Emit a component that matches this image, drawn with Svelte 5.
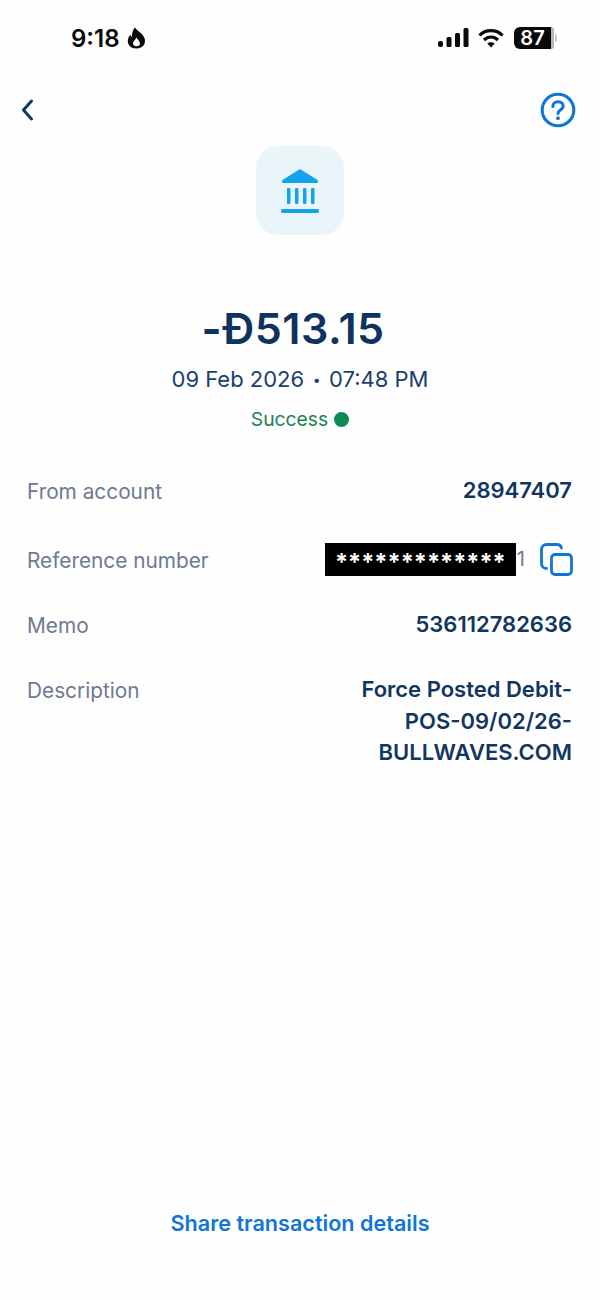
<script lang="ts">
	// Transaction details screen
	const rows = [
		{ label: 'From account', value: '28947407' },
		{ label: 'Reference number', masked: true },
		{ label: 'Memo', value: '536112782636' },
		{ label: 'Description', lines: ['Force Posted Debit-', 'POS-09/02/26-', 'BULLWAVES.COM'] }
	];
</script>

<div class="screen">
	<div class="status">
		<div class="time">
			<span>9:18</span>
			<svg width="19" height="22" viewBox="0 0 19 22">
				<path fill-rule="evenodd" fill="#0a0a0a" d="M8 .5c1.500 3 8 5.500 9.800 11.500C19 17.500 15 21.500 9.500 21.500S.5 18 .8 13.500c.2-2.500 1.500-4.500 3-5.700 0 1.200.3 2 1 2.500C5 6.500 5.500 3 8 .5zM9.500 10.500c-.5 1.800-3.500 3.500-3.500 6C6 18.300 7.500 19.300 9.500 19.300s3.500-1 3.500-2.800c0-2.500-3-4.200-3.500-6z"/>
			</svg>
		</div>
		<div class="sys">
			<svg width="31" height="20" viewBox="0 0 31 20">
				<rect x="0" y="13" width="5" height="6" rx="2" fill="#0a0a0a"/>
				<rect x="8.500" y="9" width="5" height="10" rx="1.500" fill="#0a0a0a"/>
				<rect x="17" y="5" width="5" height="14" rx="1.500" fill="#0a0a0a"/>
				<rect x="25.500" y="0" width="5" height="19" rx="1.500" fill="#0a0a0a"/>
			</svg>
			<svg width="26" height="20" viewBox="0 0 26 20" fill="none" stroke="#0a0a0a" stroke-width="3.200">
				<path d="M1.500 7.500C7.500 1 18.500 1 24.500 7.500"/>
				<path d="M6 12C10 8 16 8 20 12"/>
				<path d="M13 19.500L9.300 15.600C11.300 13.800 14.700 13.800 16.700 15.600Z" fill="#0a0a0a" stroke="none"/>
			</svg>
			<div class="battery">
				<div class="cell">87</div>
				<div class="rest"></div>
				<div class="nub"></div>
			</div>
		</div>
	</div>

	<div class="nav">
		<svg class="back" width="14" height="22" viewBox="0 0 14 22" fill="none" stroke="#12386b" stroke-width="3" stroke-linecap="round" stroke-linejoin="round">
			<path d="M11.500 2L3.500 11L11.500 20"/>
		</svg>
		<svg width="36" height="36" viewBox="0 0 36 36" fill="none">
			<circle cx="18" cy="18" r="15.800" stroke="#0f76d6" stroke-width="3.100"/>
			<path d="M12.800 14.500C12.800 11.500 15 9.800 18 9.800C21 9.800 23.200 11.500 23.200 14.200C23.200 17.800 18 17.800 18 21.500" stroke="#0f76d6" stroke-width="3" stroke-linecap="round"/>
			<circle cx="18" cy="26.200" r="1.900" fill="#0f76d6"/>
		</svg>
	</div>

	<div class="tile">
		<svg width="38" height="44" viewBox="0 0 38 44" fill="#12a3ec">
			<path d="M19 0L36.500 11C37.500 12 37 14 35.500 14H2.500C1 14 .5 12 1.500 11Z"/>
			<rect x="6" y="19" width="3.500" height="16" rx="1"/>
			<rect x="14" y="19" width="3.500" height="16" rx="1"/>
			<rect x="22" y="19" width="3.500" height="16" rx="1"/>
			<rect x="30" y="19" width="3.500" height="16" rx="1"/>
			<rect x="0" y="40" width="38" height="4" rx="1.500"/>
		</svg>
	</div>

	<div class="amount"><span class="sign">-</span>Ð513.15</div>
	<div class="date">09 Feb 2026<span class="sep">•</span>07:48 PM</div>
	<div class="state">
		<span>Success</span>
		<i class="dot"></i>
	</div>

	<div class="rows">
		{#each rows as row}
			<div class="row">
				<span class="label">{row.label}</span>
				{#if row.masked}
					<div class="ref">
						<span class="mask">*************</span>
						<span class="tail">1</span>
						<svg width="33" height="33" viewBox="0 0 33 33" fill="none" stroke="#0f76d6" stroke-width="2.800">
							<rect x="11.500" y="11.500" width="20" height="20" rx="3.500"/>
							<path d="M6.500 25.500C3.500 25.500 1.500 23.500 1.500 20.500V6.500C1.500 3.500 3.500 1.500 6.500 1.500H17C19.500 1.500 21 2.800 21.500 5" stroke-linecap="round"/>
						</svg>
					</div>
				{:else if row.lines}
					<div class="value">
						{#each row.lines as line}
							<div>{line}</div>
						{/each}
					</div>
				{:else}
					<span class="value">{row.value}</span>
				{/if}
			</div>
		{/each}
	</div>

	<div class="share">Share transaction details</div>
</div>

<style>
	:global(body) {
		margin: 0;
		background: #fefefe;
	}

	.screen {
		height: 1300px;
		display: flex;
		flex-direction: column;
		font-family: Inter, "Liberation Sans", sans-serif;
		overflow: hidden;
		position: relative;
	}

	.status {
		display: flex;
		justify-content: space-between;
		align-items: center;
		height: 30px;
		margin-top: 23px;
		padding: 0 43px 0 71px;
	}

	.time {
		display: flex;
		align-items: center;
		gap: 7px;
		font-size: 24px;
		font-weight: 600;
		color: #0a0a0a;
	}

	.sys {
		display: flex;
		align-items: center;
		gap: 9px;
	}

	.battery {
		display: flex;
		align-items: center;
		margin-left: 1px;
	}

	.cell {
		width: 37px;
		height: 22px;
		background: #0a0a0a;
		color: #fff;
		border-radius: 6px 0 0 6px;
		font-size: 20px;
		font-weight: 600;
		line-height: 22px;
		text-align: center;
	}

	.rest {
		width: 3px;
		height: 22px;
		background: #b5b5b5;
		border-radius: 0 6px 6px 0;
	}

	.nub {
		width: 2px;
		height: 8px;
		background: #c9c9c9;
		border-radius: 0 3px 3px 0;
		margin-left: 1px;
	}

	.nav {
		display: flex;
		justify-content: space-between;
		align-items: center;
		height: 36px;
		margin-top: 39px;
		padding: 0 24px 0 20px;
	}

	.tile {
		align-self: center;
		width: 88px;
		height: 89px;
		margin-top: 18px;
		background: #eaf5f9;
		border-radius: 22px;
		display: flex;
		align-items: center;
		justify-content: center;
	}

	.amount {
		margin-top: 68px;
		padding-right: 14px;
		text-align: center;
		font-size: 43px;
		font-weight: 600;
		line-height: 50px;
		letter-spacing: 0.500px;
		color: #0e335f;
	}

	.sign {
		font-weight: 700;
	}

	.date {
		margin-top: 12px;
		text-align: center;
		font-size: 22px;
		line-height: 28px;
		color: #1c3e6c;
	}

	.sep {
		font-size: 14px;
		margin: 0 8.500px;
		vertical-align: 2px;
	}

	.state {
		margin-top: 12px;
		display: flex;
		justify-content: center;
		align-items: center;
		gap: 6px;
		font-size: 19.300px;
		line-height: 26px;
		color: #1c8152;
	}

	.dot {
		width: 15px;
		height: 15px;
		border-radius: 50%;
		background: #0e8a54;
	}

	.rows {
		margin-top: 44px;
		padding: 0 28px 0 27px;
		display: flex;
		flex-direction: column;
	}

	.row {
		display: flex;
		justify-content: space-between;
		align-items: flex-start;
		margin-bottom: 33px;
		line-height: 32px;
	}

	.row:first-child {
		margin-bottom: 37px;
	}

	.label {
		font-size: 20.800px;
		color: #6d7a92;
	}

	.value {
		margin-top: -1px;
		font-size: 22px;
		line-height: 31.500px;
		font-weight: 600;
		color: #12365f;
		text-align: right;
	}

	.ref {
		display: flex;
		align-items: center;
		height: 32px;
		margin: -2px -1px 0 0;
	}

	.mask {
		background: #000;
		color: #fff;
		width: 191px;
		height: 33px;
		line-height: 37px;
		font-size: 23.500px;
		font-weight: 700;
		text-align: center;
		overflow: hidden;
	}

	.tail {
		font-size: 20px;
		color: #6d7a92;
		margin: 0 15px 0 1px;
	}

	.share {
		position: absolute;
		left: 0;
		right: 0;
		top: 1208px;
		text-align: center;
		font-size: 21.600px;
		font-weight: 600;
		line-height: 30px;
		color: #0f76d6;
	}
</style>
